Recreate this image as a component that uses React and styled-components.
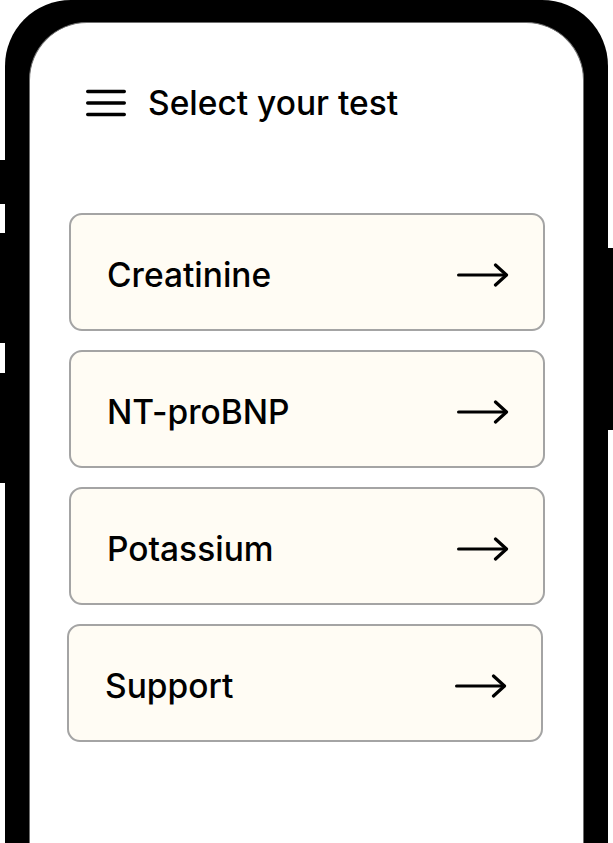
import React from "react";
import styled, { createGlobalStyle } from "styled-components";

const GlobalStyle = createGlobalStyle`
  html, body {
    margin: 0;
    padding: 0;
    background: #ffffff;
    overflow: hidden;
  }
  body {
    font-family: Inter, "Noto Sans", sans-serif;
    color: #000000;
  }
`;

const Page = styled.div`
  height: 100vh;
  padding-left: 5px;
`;

const Phone = styled.div`
  position: relative;
  width: 603px;
  height: 100%;
  box-sizing: border-box;
  background: #000000;
  border-radius: 66px 66px 0 0;
  padding: 22px 24px 0 24px;
`;

// hardware buttons sticking out of the frame
const SideButton = styled.span`
  position: absolute;
  top: ${(p) => p.$top}px;
  height: ${(p) => p.$height}px;
  width: 6px;
  background: #000000;
  ${(p) => (p.$right ? "right: -5px;" : "left: -5px;")}
`;

const Screen = styled.div`
  height: 100%;
  box-sizing: border-box;
  background: #ffffff;
  border: 1px solid #6f6f6f;
  border-bottom: none;
  border-radius: 58px 58px 0 0;
  padding: 59px 0 0 56px;
`;

const Header = styled.header`
  display: flex;
  align-items: center;
  gap: 22px;
  height: 42px;
`;

const MenuIcon = styled.svg`
  width: 40px;
  height: 28px;
  flex-shrink: 0;
`;

const Title = styled.h1`
  margin: 0;
  font-size: 33.5px;
  font-weight: 550;
  line-height: 42px;
`;

const TestList = styled.div`
  display: flex;
  flex-direction: column;
  gap: 19px;
  margin: 89px 0 0 -17px;
  width: 476px;
`;

const TestCard = styled.button`
  display: flex;
  align-items: center;
  justify-content: space-between;
  box-sizing: border-box;
  width: 100%;
  height: 118px;
  margin-left: ${(p) => p.$shift || 0}px;
  padding: 6px 34px 0 36px;
  background: #fffcf4;
  border: 2px solid #a4a4a4;
  border-radius: 13px;
  font-family: Inter, "Noto Sans", sans-serif;
  font-size: 33.5px;
  font-weight: 550;
  color: #000000;
  text-align: left;
  cursor: pointer;
`;

const Arrow = styled.svg`
  width: 52px;
  height: 24px;
  flex-shrink: 0;
`;

const tests = [
  { name: "Creatinine" },
  { name: "NT-proBNP" },
  { name: "Potassium" },
  { name: "Support", shift: -2 },
];

const Hamburger = () => (
  <MenuIcon viewBox="0 0 40 28" fill="none" stroke="#000" strokeWidth="3.4" strokeLinecap="round">
    <line x1="1.7" y1="2.5" x2="38.3" y2="2.5" />
    <line x1="1.7" y1="14" x2="38.3" y2="14" />
    <line x1="1.7" y1="25.5" x2="38.3" y2="25.5" />
  </MenuIcon>
);

const LongArrow = () => (
  <Arrow viewBox="0 0 52 24" fill="none" stroke="#000" strokeWidth="3.2" strokeLinecap="round" strokeLinejoin="round">
    <line x1="1.6" y1="12" x2="49" y2="12" />
    <polyline points="38.5,2 49.5,12 38.5,22" />
  </Arrow>
);

export default function App() {
  return (
    <>
      <GlobalStyle />
      <Page>
        <Phone>
          <SideButton $top={160} $height={44} />
          <SideButton $top={233} $height={110} />
          <SideButton $top={373} $height={110} />
          <SideButton $right $top={248} $height={182} />
          <Screen>
            <Header>
              <Hamburger />
              <Title>Select your test</Title>
            </Header>
            <TestList>
              {tests.map((t) => (
                <TestCard key={t.name} $shift={t.shift}>
                  {t.name}
                  <LongArrow />
                </TestCard>
              ))}
            </TestList>
          </Screen>
        </Phone>
      </Page>
    </>
  );
}
